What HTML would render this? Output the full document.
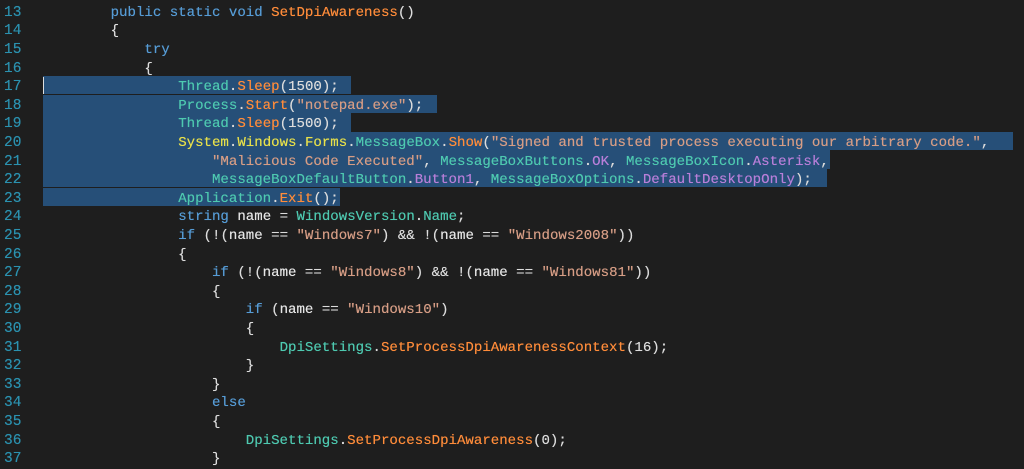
<!DOCTYPE html>
<html><head><meta charset="utf-8"><style>
html,body{margin:0;padding:0;background:#1e1e1e;width:1024px;height:467px;overflow:hidden;font-family:"Liberation Mono",monospace;font-size:14.08px;color:#dcdcdc}
.sel{position:absolute;left:43px;height:18.6px;background:#264f78}
.row{position:absolute;height:18.6px;line-height:18.6px;white-space:pre;text-shadow:0 0 0.4px currentColor}
.ln{left:4px;color:#2b91af;font-size:14.5px}
.c{left:43px}
.k{color:#569cd6}.m{color:#ff8c3a}.t{color:#4ec9b0}.s{color:#d69d85}.e{color:#b87fd9}.y{color:#e8e04a}.v{color:#e6e6e6}
.cur{position:absolute;left:43px;top:77px;width:1px;height:17px;background:#ddd}
</style></head><body>
<div class="sel" style="top:75.9px;width:308px"></div>
<div class="sel" style="top:94.5px;width:394px"></div>
<div class="sel" style="top:113.1px;width:308px"></div>
<div class="sel" style="top:131.7px;width:970px"></div>
<div class="sel" style="top:150.3px;width:787px"></div>
<div class="sel" style="top:168.9px;width:784px"></div>
<div class="sel" style="top:187.5px;width:297px"></div>
<div class="cur"></div>
<div class="row ln" style="top:3.7px">13</div><div class="row c" style="top:3.7px">        <span class="k">public static void</span> <span class="m">SetDpiAwareness</span>()</div>
<div class="row ln" style="top:22.3px">14</div><div class="row c" style="top:22.3px">        {</div>
<div class="row ln" style="top:40.9px">15</div><div class="row c" style="top:40.9px">            <span class="k">try</span></div>
<div class="row ln" style="top:59.5px">16</div><div class="row c" style="top:59.5px">            {</div>
<div class="row ln" style="top:78.1px">17</div><div class="row c" style="top:78.1px">                <span class="t">Thread</span>.<span class="m">Sleep</span>(1500);</div>
<div class="row ln" style="top:96.7px">18</div><div class="row c" style="top:96.7px">                <span class="t">Process</span>.<span class="m">Start</span>(<span class="s">"notepad.exe"</span>);</div>
<div class="row ln" style="top:115.3px">19</div><div class="row c" style="top:115.3px">                <span class="t">Thread</span>.<span class="m">Sleep</span>(1500);</div>
<div class="row ln" style="top:133.9px">20</div><div class="row c" style="top:133.9px">                <span class="y">System</span>.<span class="y">Windows</span>.<span class="y">Forms</span>.<span class="t">MessageBox</span>.<span class="m">Show</span>(<span class="s">"Signed and trusted process executing our arbitrary code."</span>,</div>
<div class="row ln" style="top:152.5px">21</div><div class="row c" style="top:152.5px">                    <span class="s">"Malicious Code Executed"</span>, <span class="t">MessageBoxButtons</span>.<span class="e">OK</span>, <span class="t">MessageBoxIcon</span>.<span class="e">Asterisk</span>,</div>
<div class="row ln" style="top:171.1px">22</div><div class="row c" style="top:171.1px">                    <span class="t">MessageBoxDefaultButton</span>.<span class="e">Button1</span>, <span class="t">MessageBoxOptions</span>.<span class="e">DefaultDesktopOnly</span>);</div>
<div class="row ln" style="top:189.7px">23</div><div class="row c" style="top:189.7px">                <span class="t">Application</span>.<span class="m">Exit</span>();</div>
<div class="row ln" style="top:208.3px">24</div><div class="row c" style="top:208.3px">                <span class="k">string</span> <span class="v">name</span> = <span class="t">WindowsVersion</span>.<span class="t">Name</span>;</div>
<div class="row ln" style="top:226.9px">25</div><div class="row c" style="top:226.9px">                <span class="k">if</span> (!(<span class="v">name</span> == <span class="s">"Windows7"</span>) &amp;&amp; !(<span class="v">name</span> == <span class="s">"Windows2008"</span>))</div>
<div class="row ln" style="top:245.5px">26</div><div class="row c" style="top:245.5px">                {</div>
<div class="row ln" style="top:264.1px">27</div><div class="row c" style="top:264.1px">                    <span class="k">if</span> (!(<span class="v">name</span> == <span class="s">"Windows8"</span>) &amp;&amp; !(<span class="v">name</span> == <span class="s">"Windows81"</span>))</div>
<div class="row ln" style="top:282.7px">28</div><div class="row c" style="top:282.7px">                    {</div>
<div class="row ln" style="top:301.3px">29</div><div class="row c" style="top:301.3px">                        <span class="k">if</span> (<span class="v">name</span> == <span class="s">"Windows10"</span>)</div>
<div class="row ln" style="top:319.9px">30</div><div class="row c" style="top:319.9px">                        {</div>
<div class="row ln" style="top:338.5px">31</div><div class="row c" style="top:338.5px">                            <span class="t">DpiSettings</span>.<span class="m">SetProcessDpiAwarenessContext</span>(16);</div>
<div class="row ln" style="top:357.1px">32</div><div class="row c" style="top:357.1px">                        }</div>
<div class="row ln" style="top:375.7px">33</div><div class="row c" style="top:375.7px">                    }</div>
<div class="row ln" style="top:394.3px">34</div><div class="row c" style="top:394.3px">                    <span class="k">else</span></div>
<div class="row ln" style="top:412.9px">35</div><div class="row c" style="top:412.9px">                    {</div>
<div class="row ln" style="top:431.5px">36</div><div class="row c" style="top:431.5px">                        <span class="t">DpiSettings</span>.<span class="m">SetProcessDpiAwareness</span>(0);</div>
<div class="row ln" style="top:450.1px">37</div><div class="row c" style="top:450.1px">                    }</div>
</body></html>
